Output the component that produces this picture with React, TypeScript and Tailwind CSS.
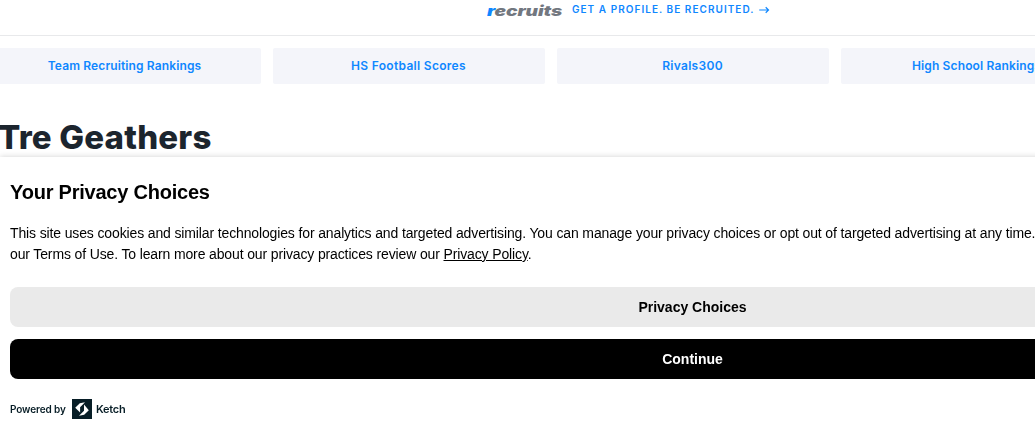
const quickLinks = [
  { label: 'Team Recruiting Rankings', tracking: 'tracking-[0.12px]' },
  { label: 'HS Football Scores', tracking: 'tracking-[0.3px]' },
  { label: 'Rivals300', tracking: 'tracking-[0.3px]' },
  { label: 'High School Rankings', tracking: 'tracking-[0.14px]' },
]

function RecruitsBanner() {
  return (
    <div className="flex h-9 items-start border-b border-[#e8e9eb] pl-[487px]">
      <span className="w-[85px] origin-left scale-x-[1.37] whitespace-nowrap text-[14px] font-black italic leading-[21px] tracking-[-0.1px] text-[#72777f]">
        <span className="text-[#0f87ff]">r</span>ecruits
      </span>
      <span className="whitespace-nowrap text-[10px] font-semibold leading-[19px] tracking-[1.04px] text-[#0f87ff]">
        GET A PROFILE. BE RECRUITED.
      </span>
      <svg className="ml-1 mt-[5px]" width="11" height="10" viewBox="0 0 11 10" fill="none" stroke="#0f87ff" strokeWidth="1.2">
        <path d="M0.2 5H9.3M6.7 2.3L9.5 5L6.7 7.7" />
      </svg>
    </div>
  )
}

function QuickLinks() {
  return (
    <nav className="-ml-[11px] flex gap-3 pt-3">
      {quickLinks.map(({ label, tracking }) => (
        <a
          key={label}
          href="#"
          className={`flex h-9 w-[272px] shrink-0 items-center justify-center rounded-xs bg-[#f4f5fa] pr-px text-xs font-semibold text-[#0f87ff] ${tracking}`}
        >
          {label}
        </a>
      ))}
    </nav>
  )
}

function KetchMark() {
  return (
    <svg width="20" height="20" viewBox="0 0 20 20">
      <path fill="#071d26" d="M0 0h20v20H0z" />
      <path fill="#fff" d="M13 3.2 7.8 4.2 3.2 8.8 8.1 13.6V8.2z" />
      <path fill="#fff" d="M12 5.6v6.2l-5 5 5.2-1 4.6-4.6z" />
    </svg>
  )
}

function PrivacyBanner() {
  return (
    <section className="fixed bottom-0 left-0 h-[278px] w-[1385px] bg-white px-2.5 font-['Liberation_Sans',sans-serif] text-black shadow-[0_0_6px_rgba(0,0,0,0.18)]">
      <h2 className="pt-5 text-xl font-bold leading-[30px] tracking-[-0.22px]">Your Privacy Choices</h2>
      <p className="mt-4 whitespace-nowrap text-sm leading-[21px] tracking-[-0.134px]">
        This site uses cookies and similar technologies for analytics and targeted advertising. You can manage your privacy choices or opt out of targeted advertising at any time.
        <br />
        our Terms of Use. To learn more about our privacy practices review our{' '}
        <a href="#" className="underline">Privacy Policy</a>.
      </p>
      <div className="mt-[22px] flex flex-col gap-3">
        <button className="h-10 rounded-lg bg-[#eaeaea] text-sm font-bold">Privacy Choices</button>
        <button className="h-10 rounded-lg bg-black text-sm font-bold text-white">Continue</button>
      </div>
      <div className="mt-5 flex h-5 items-center font-[Inter] text-[10px] font-semibold text-[#071d26]">
        <span className="w-[62px] whitespace-nowrap tracking-[-0.1px]">Powered by</span>
        <KetchMark />
        <span className="ml-1 text-[11px] tracking-[-0.25px]">Ketch</span>
      </div>
    </section>
  )
}

export default function App() {
  return (
    <div className="h-[435px] w-full overflow-hidden bg-white font-[Inter,sans-serif]">
      <RecruitsBanner />
      <QuickLinks />
      <h1 className="-ml-0.5 mt-[33px] whitespace-nowrap text-[33px] font-extrabold leading-10 tracking-[0.2px] text-[#1c252e]">
        Tre Geathers
      </h1>
      <PrivacyBanner />
    </div>
  )
}
